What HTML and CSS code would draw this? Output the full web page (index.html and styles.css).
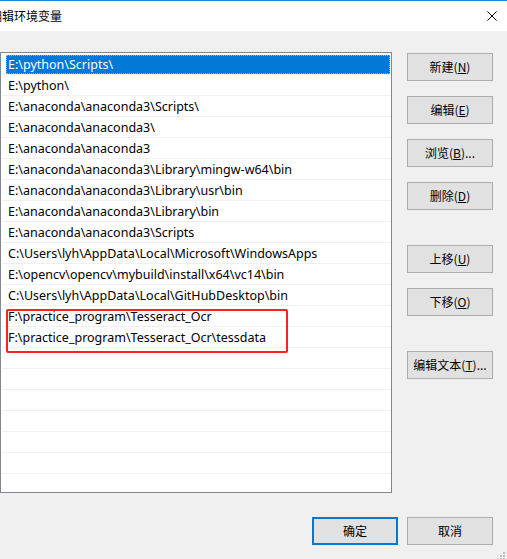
FILE: index.html
```html
<!DOCTYPE html>
<html lang="zh-CN">
<head>
<meta charset="utf-8">
<title>编辑环境变量</title>
<link rel="stylesheet" href="styles.css">
</head>
<body>
<div class="window">
  <div class="titlebar">
    <span class="title">编辑环境变量</span>
    <svg class="close" width="10" height="10" viewBox="0 0 10 10"><path d="M0.5 0.5 L9.5 9.5 M9.5 0.5 L0.5 9.5" stroke="#000" stroke-width="1" fill="none"/></svg>
  </div>
  <div class="body">
    <div class="main">
      <div class="list">
        <div class="row"><span class="cell selected">E:\python\Scripts\</span></div>
        <div class="row"><span class="cell">E:\python\</span></div>
        <div class="row"><span class="cell">E:\anaconda\anaconda3\Scripts\</span></div>
        <div class="row"><span class="cell">E:\anaconda\anaconda3\</span></div>
        <div class="row"><span class="cell">E:\anaconda\anaconda3</span></div>
        <div class="row"><span class="cell">E:\anaconda\anaconda3\Library\mingw-w64\bin</span></div>
        <div class="row"><span class="cell">E:\anaconda\anaconda3\Library\usr\bin</span></div>
        <div class="row"><span class="cell">E:\anaconda\anaconda3\Library\bin</span></div>
        <div class="row"><span class="cell">E:\anaconda\anaconda3\Scripts</span></div>
        <div class="row"><span class="cell">C:\Users\lyh\AppData\Local\Microsoft\WindowsApps</span></div>
        <div class="row"><span class="cell">E:\opencv\opencv\mybuild\install\x64\vc14\bin</span></div>
        <div class="row"><span class="cell">C:\Users\lyh\AppData\Local\GitHubDesktop\bin</span></div>
        <div class="row"><span class="cell">F:\practice_program\Tesseract_Ocr</span></div>
        <div class="row"><span class="cell">F:\practice_program\Tesseract_Ocr\tessdata</span></div>
        <div class="row"><span class="cell"></span></div>
        <div class="row"><span class="cell"></span></div>
        <div class="row"><span class="cell"></span></div>
        <div class="row"><span class="cell"></span></div>
        <div class="row"><span class="cell"></span></div>
        <div class="row"><span class="cell"></span></div>
        <div class="row"><span class="cell"></span></div>
        <div class="annot"></div>
      </div>
      <div class="side">
        <button class="btn">新建(<u>N</u>)</button>
        <button class="btn">编辑(<u>E</u>)</button>
        <button class="btn">浏览(<u>B</u>)...</button>
        <button class="btn">删除(<u>D</u>)</button>
        <button class="btn push">上移(<u>U</u>)</button>
        <button class="btn">下移(<u>O</u>)</button>
        <button class="btn push">编辑文本(<u>T</u>)...</button>
      </div>
    </div>
    <div class="footer">
      <button class="btn default">确定</button>
      <button class="btn">取消</button>
    </div>
  </div>
  <svg class="grip" width="11" height="8" viewBox="0 0 11 8">
    <rect x="8" y="0" width="2" height="2" fill="#bdbdbd"/>
    <rect x="5" y="3" width="2" height="2" fill="#bdbdbd"/>
    <rect x="8" y="3" width="2" height="2" fill="#bdbdbd"/>
    <rect x="2" y="6" width="2" height="2" fill="#bdbdbd"/>
    <rect x="5" y="6" width="2" height="2" fill="#bdbdbd"/>
    <rect x="8" y="6" width="2" height="2" fill="#bdbdbd"/>
  </svg>
</div>
</body>
</html>
```
FILE: styles.css
```css
* { box-sizing: border-box; }
html, body { margin: 0; padding: 0; }
body {
  background: #f0f0f0;
  font-family: "Noto Sans", "Noto Sans CJK SC", sans-serif;
  font-size: 12px;
  color: #000;
}
.window {
  position: relative;
  width: 507px;
  height: 559px;
  overflow: hidden;
  background: #f0f0f0;
}
.titlebar {
  height: 31px;
  border-top: 1px solid #1883d7;
  background: #fff;
  display: flex;
  align-items: center;
  justify-content: space-between;
  padding-right: 10px;
}
.title {
  margin-left: -10px;
  font-family: "Noto Sans CJK SC", sans-serif;
  font-size: 12px;
  margin-bottom: 1px;
}
.close { margin-bottom: 1px; display: block; }
.body {
  padding-top: 21px;
}
.main {
  display: flex;
  gap: 15px;
}
.list {
  position: relative;
  width: 392px;
  height: 441px;
  background: #fff;
  border: 1px solid #828790;
  padding: 1px 0 0 1px;
  overflow: hidden;
}
.row {
  height: 21px;
  border-bottom: 1px solid #f0f0f0;
  display: flex;
}
.cell {
  flex: 1;
  height: 19px;
  margin: 1px 1px 0 4px;
  padding-left: 1px;
  border: 1px dotted transparent;
  font-size: 12.5px;
  line-height: 17px;
  white-space: nowrap;
}
.cell.selected {
  background: #0078d7;
  color: #fff;
  border-color: #ff9a40;
}
.annot {
  position: absolute;
  left: 5px;
  top: 256px;
  width: 282px;
  height: 44px;
  border: 2px solid #ff2121;
  border-radius: 2px;
}
.side {
  display: flex;
  flex-direction: column;
  gap: 15px;
  padding-top: 1px;
}
.btn {
  width: 86px;
  height: 28px;
  padding: 0;
  background: #e1e1e1;
  border: 1px solid #adadad;
  border-radius: 0;
  font-family: "Noto Sans CJK SC", sans-serif;
  font-size: 12px;
  color: #000;
  line-height: 1;
}
.btn u { text-underline-offset: 1px; }
.push { margin-top: 20px; }
.footer {
  display: flex;
  justify-content: flex-end;
  gap: 9px;
  padding-right: 14px;
  margin-top: 24px;
}
.default { border: 2px solid #0078d7; }
.grip {
  position: absolute;
  right: 1px;
  bottom: -1px;
}
```
